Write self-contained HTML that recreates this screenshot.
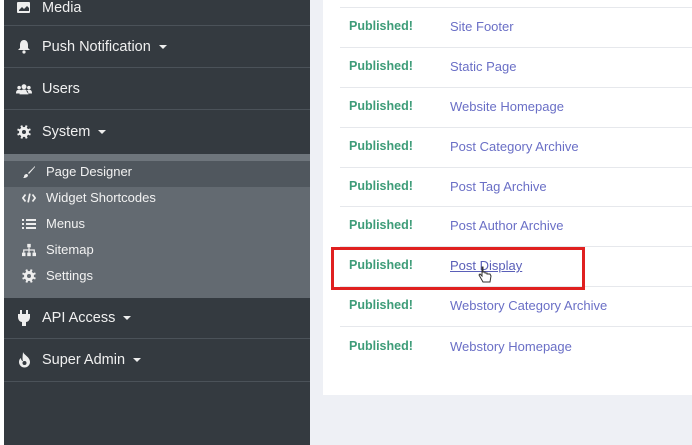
<!DOCTYPE html>
<html><head><style>
*{margin:0;padding:0;box-sizing:border-box}
body{width:692px;height:445px;overflow:hidden;background:#eef0f5;font-family:"Liberation Sans",sans-serif;position:relative}
.side{position:absolute;left:4px;top:0;width:306px;height:445px;background:#343a40}
.lstrip{position:absolute;left:0;top:0;width:4px;height:445px;background:#fff}
.item{position:absolute;left:0;width:306px;color:#f0f0f0;font-size:14.5px;border-bottom:1px solid #4b5259;display:flex;align-items:center}
.item .ic{width:16px;margin-left:12px;margin-right:10px;display:flex;justify-content:center}
.caret{display:inline-block;width:0;height:0;border-left:4px solid transparent;border-right:4px solid transparent;border-top:4px solid #eee;margin-left:8px;vertical-align:middle}
.sub{position:absolute;left:0;top:154px;width:306px;height:144px;background:#636a71}
.sub .band{height:7px;background:#6e757c}
.sub .pd{position:absolute;left:0;top:7px;width:306px;height:26px;background:#50575e}
.si{position:absolute;left:18px;color:#f2f2f2;font-size:13px;display:flex;align-items:center}
.si .ic{width:14px;margin-right:10px;display:flex;justify-content:center}
.card{position:absolute;left:323px;top:0;width:369px;height:395px;background:#fff}
.row{position:absolute;left:340px;width:352px;border-top:1px solid #e6e8ec;height:40px}
.pub{position:absolute;left:349px;color:#3d9c78;font-weight:bold;font-size:12.5px}
.lnk{position:absolute;left:450px;color:#6a6fc6;font-size:13px}
.red{position:absolute;left:331px;top:247px;width:254px;height:43px;border:3px solid #e02020}
</style></head><body>
<div class="lstrip"></div>
<div class="side">
 <div class="item" style="top:-10px;height:36px"><span class="ic"><svg width="16" height="14" viewBox="0 0 16 14"><rect x="1" y="1" width="13" height="11" rx="1" fill="#eee"/><path d="M3 9l3-3 2 2 3-3 2 2v3H3z" fill="#343a40"/></svg></span>Media</div>
 <div class="item" style="top:26px;height:42px"><span class="ic"><svg width="14" height="15" viewBox="0 0 14 15"><path d="M7 1C4 1 3 4 3 6v3l-2 2h12l-2-2V6c0-2-1-5-4-5z" fill="#eee"/><circle cx="7" cy="13" r="1.6" fill="#eee"/></svg></span>Push Notification<span class="caret"></span></div>
 <div class="item" style="top:68px;height:42px"><span class="ic"><svg width="18" height="12" viewBox="0 0 18 12"><circle cx="9" cy="3.5" r="2.8" fill="#eee"/><circle cx="3.5" cy="4.5" r="2" fill="#eee"/><circle cx="14.5" cy="4.5" r="2" fill="#eee"/><path d="M4 12c0-4 2-5.5 5-5.5s5 1.5 5 5.5z M0 11c0-3 1-4 3.5-4s3 1 3 1l-2 3z M18 11c0-3-1-4-3.5-4s-3 1-3 1l2 3z" fill="#eee"/></svg></span>Users</div>
 <div class="item" style="top:110px;height:44px;border-bottom:none"><span class="ic"><svg width="14" height="14" viewBox="0 0 14 14"><circle cx="7" cy="7" r="5" fill="#eee"/><path d="M6 0h2v14H6zM0 6h14v2H0z" fill="#eee" transform="rotate(22 7 7)"/><path d="M6 0h2v14H6zM0 6h14v2H0z" fill="#eee" transform="rotate(67 7 7)"/><circle cx="7" cy="7" r="2" fill="#343a40"/></svg></span>System<span class="caret"></span></div>
 <div class="sub"><div class="band"></div><div class="pd"></div>
  <div class="si" style="top:10px"><span class="ic"><svg width="14" height="14" viewBox="0 0 14 14"><path d="M13 1L6 8l1 1 6-7z M5 9c-2 0-3 1-3 3l-1 1c3 0 5-1 5-3z" fill="#eee"/></svg></span>Page Designer</div>
  <div class="si" style="top:36px"><span class="ic"><svg width="16" height="12" viewBox="0 0 16 12"><path d="M4 2L1 6l3 4M12 2l3 4-3 4M9 1L7 11" stroke="#eee" stroke-width="2" fill="none"/></svg></span>Widget Shortcodes</div>
  <div class="si" style="top:62px"><span class="ic"><svg width="14" height="12" viewBox="0 0 14 12"><path d="M0 1h2v2H0zM4 1h10v2H4zM0 5h2v2H0zM4 5h10v2H4zM0 9h2v2H0zM4 9h10v2H4z" fill="#eee"/></svg></span>Menus</div>
  <div class="si" style="top:88px"><span class="ic"><svg width="16" height="14" viewBox="0 0 16 14"><rect x="6" y="0" width="4" height="4" fill="#eee"/><path d="M8 4v3M2 10V7h12v3M8 7v3" stroke="#eee" stroke-width="1.4" fill="none"/><rect x="0" y="10" width="4" height="4" fill="#eee"/><rect x="6" y="10" width="4" height="4" fill="#eee"/><rect x="12" y="10" width="4" height="4" fill="#eee"/></svg></span>Sitemap</div>
  <div class="si" style="top:114px"><span class="ic"><svg width="14" height="14" viewBox="0 0 14 14"><circle cx="7" cy="7" r="5" fill="#eee"/><path d="M6 0h2v14H6zM0 6h14v2H0z" fill="#eee" transform="rotate(22 7 7)"/><path d="M6 0h2v14H6zM0 6h14v2H0z" fill="#eee" transform="rotate(67 7 7)"/><circle cx="7" cy="7" r="2" fill="#636a71"/></svg></span>Settings</div>
 </div>
 <div class="item" style="top:298px;height:41px"><span class="ic"><svg width="12" height="16" viewBox="0 0 12 16"><path d="M3 0v4M9 0v4" stroke="#eee" stroke-width="2"/><path d="M0 4h12v3c0 3-2 5-4 5v4H4v-4C2 12 0 10 0 7z" fill="#eee"/></svg></span>API Access<span class="caret"></span></div>
 <div class="item" style="top:339px;height:43px"><span class="ic"><svg width="13" height="16" viewBox="0 0 13 16"><path d="M5 0c1 3 7 5 7 10a5.5 5.5 0 0 1-11 0c0-3 2-4 2-4 0 2 1 3 2 3-1-3 0-7 0-9z" fill="#eee"/><circle cx="6.5" cy="11" r="2" fill="#343a40"/></svg></span>Super Admin<span class="caret"></span></div>
</div>
<div class="card"></div>
<div class="row" style="top:7px"></div>
<div class="row" style="top:47px"></div>
<div class="row" style="top:87px"></div>
<div class="row" style="top:127px"></div>
<div class="row" style="top:167px"></div>
<div class="row" style="top:206px"></div>
<div class="row" style="top:246px"></div>
<div class="row" style="top:286px"></div>
<div class="row" style="top:326px"></div>
<div class="pub" style="top:19px">Published!</div><div class="lnk" style="top:19px">Site Footer</div>
<div class="pub" style="top:59px">Published!</div><div class="lnk" style="top:59px">Static Page</div>
<div class="pub" style="top:99px">Published!</div><div class="lnk" style="top:99px">Website Homepage</div>
<div class="pub" style="top:139px">Published!</div><div class="lnk" style="top:139px">Post Category Archive</div>
<div class="pub" style="top:179px">Published!</div><div class="lnk" style="top:179px">Post Tag Archive</div>
<div class="pub" style="top:218px">Published!</div><div class="lnk" style="top:218px">Post Author Archive</div>
<div class="pub" style="top:258px">Published!</div><div class="lnk" style="top:258px;text-decoration:underline;color:#5a5fb8">Post Display</div>
<div class="pub" style="top:298px">Published!</div><div class="lnk" style="top:298px">Webstory Category Archive</div>
<div class="pub" style="top:339px">Published!</div><div class="lnk" style="top:339px">Webstory Homepage</div>
<div class="red"></div>
<svg style="position:absolute;left:478px;top:266px" width="14" height="18" viewBox="0 0 14 18"><path d="M4 1v9l-2-2-1 1 4 7h7l1-6-1-2H9V7H7V6H5V1z" fill="#fff" stroke="#333" stroke-width="1"/></svg>
</body></html>
